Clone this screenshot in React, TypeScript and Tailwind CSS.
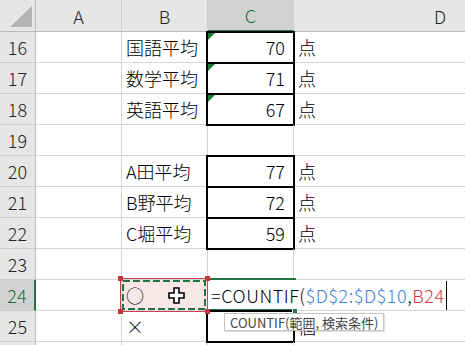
import React from 'react';

type RowData = {
  n: number | string;
  b?: string;
  c?: string;
  d?: string;
  box?: boolean;
  tri?: boolean;
};

const ROWS: RowData[] = [
  { n: 16, b: '国語平均', c: '70', d: '点', box: true, tri: true },
  { n: 17, b: '数学平均', c: '71', d: '点', box: true, tri: true },
  { n: 18, b: '英語平均', c: '67', d: '点', box: true, tri: true },
  { n: 19 },
  { n: 20, b: 'A田平均', c: '77', d: '点', box: true },
  { n: 21, b: 'B野平均', c: '72', d: '点', box: true },
  { n: 22, b: 'C堀平均', c: '59', d: '点', box: true },
  { n: 23 },
];

// thick black outline drawn over the cell's gridlines
function Box({ tri }: { tri?: boolean }) {
  return (
    <>
      <div className="pointer-events-none absolute -left-[2px] -right-[2px] -top-px -bottom-[2px] border-2 border-black" />
      {tri && (
        <div className="absolute left-0 top-px h-0 w-0 border-t-[7px] border-r-[7px] border-t-[#1e7a34] border-r-transparent" />
      )}
    </>
  );
}

function RowHead({ n, active }: { n: number | string; active?: boolean }) {
  return (
    <div
      className={
        active
          ? 'flex w-[36px] shrink-0 items-center justify-center border-b border-r-2 border-b-[#cfcfcf] border-r-[#217346] bg-[#d2d2d2] text-[#1e6b41]'
          : 'flex w-[36px] shrink-0 items-center justify-center border-b border-r border-b-[#cfcfcf] border-r-[#bcbcbc] bg-[#e6e6e6] text-[#222]'
      }
    >
      {n}
    </div>
  );
}

function Row({ n, b, c, d, box, tri }: RowData) {
  return (
    <div className="flex h-[31px]">
      <RowHead n={n} />
      <div className="w-[86px] shrink-0 border-b border-r border-[#d4d4d4]" />
      <div className="flex w-[86px] shrink-0 items-center whitespace-nowrap border-b border-r border-[#d4d4d4] pl-[4px]">
        {b}
      </div>
      <div className="relative flex w-[86px] shrink-0 items-center justify-end border-b border-r border-[#d4d4d4] pr-[8px]">
        {c}
        {box && <Box tri={tri} />}
      </div>
      <div className="flex w-[292px] shrink-0 items-center border-b border-[#d4d4d4] pl-[4px]">{d}</div>
    </div>
  );
}

function Marquee() {
  return (
    <svg
      className="pointer-events-none absolute -left-[4px] -top-[4px] z-10"
      width="92"
      height="38"
      viewBox="0 0 92 38"
    >
      <rect x="2.5" y="2.5" width="87" height="33" fill="none" stroke="#c8434a" strokeWidth="1" />
      <rect
        x="5"
        y="5"
        width="82"
        height="28"
        fill="none"
        stroke="#217346"
        strokeWidth="2"
        strokeDasharray="7 3"
      />
      <rect x="0" y="0" width="5" height="5" fill="#c0393e" />
      <rect x="87" y="0" width="5" height="5" fill="#c0393e" />
      <rect x="0" y="33" width="5" height="5" fill="#c0393e" />
      <rect x="87" y="33" width="5" height="5" fill="#c0393e" />
    </svg>
  );
}

function PointerCross() {
  return (
    <svg className="absolute left-[46px] top-[7px] z-10" width="18" height="18" viewBox="0 0 18 18">
      <path
        d="M6 1h5v5h5v5h-5v5H6v-5H1V6h5z"
        fill="#fff"
        stroke="#000"
        strokeWidth="1.6"
        strokeLinejoin="miter"
      />
    </svg>
  );
}

export default function App() {
  return (
    <div className="h-[345px] w-[465px] overflow-hidden bg-white font-['Noto_Sans_CJK_JP',sans-serif] text-[18px] font-light leading-none text-black">
      {/* column headers */}
      <div className="flex h-[32px]">
        <div className="relative w-[36px] shrink-0 border-b border-r border-b-[#bcbcbc] border-r-[#bcbcbc] bg-[#e6e6e6]">
          <div className="absolute left-[10px] top-[6px] h-0 w-0 border-b-[21px] border-l-[22px] border-b-[#b4b4b4] border-l-transparent" />
        </div>
        <div className="flex w-[86px] shrink-0 items-center justify-center border-b border-r border-b-[#bcbcbc] border-r-[#cdcdcd] bg-[#e6e6e6] text-[#222]">
          A
        </div>
        <div className="flex w-[86px] shrink-0 items-center justify-center border-b border-r border-b-[#bcbcbc] border-r-[#cdcdcd] bg-[#e6e6e6] text-[#222]">
          B
        </div>
        <div className="flex w-[86px] shrink-0 items-center justify-center border-b-2 border-r border-b-[#217346] border-r-[#cdcdcd] bg-[#d2d2d2] text-[#1e6b41]">
          C
        </div>
        <div className="flex w-[292px] shrink-0 items-center justify-center border-b border-b-[#bcbcbc] bg-[#e6e6e6] text-[#222]">
          D
        </div>
      </div>

      {ROWS.map((r) => (
        <Row key={r.n} {...r} />
      ))}

      {/* row 24: editing C24, B24 referenced */}
      <div className="flex h-[31px]">
        <RowHead n={24} active />
        <div className="w-[86px] shrink-0 border-b border-r border-[#d4d4d4]" />
        <div className="relative flex w-[86px] shrink-0 items-center border-b border-r border-[#d4d4d4] bg-[#f9e7e7] pl-[4px]">
          ○
          <Marquee />
          <PointerCross />
        </div>
        <div className="relative flex w-[86px] shrink-0 items-center border-b border-[#d4d4d4] pl-[3px]">
          <div className="absolute -left-[2px] -right-[2px] -top-[2px] h-[2px] bg-[#217346]" />
          <div className="absolute -bottom-[1px] -left-[2px] -right-[2px] h-[2px] bg-[#217346]" />
          <div className="absolute -bottom-[4px] -right-[4px] z-10 h-[6px] w-[6px] border border-white bg-[#217346]" />
          <div className="relative z-10 flex items-center whitespace-nowrap tracking-[0.55px]">
            <span>=COUNTIF(</span>
            <span className="text-[#3c7fd8]">$D$2:$D$10</span>
            <span>,</span>
            <span className="text-[#d23a3c]">B24</span>
            <span className="ml-px inline-block h-[29px] w-px bg-black" />
          </div>
          <div className="absolute left-[16px] top-[33px] z-20 flex h-[18px] items-center whitespace-nowrap border border-[#c4c4c4] bg-white px-[5px] text-[13px] font-normal text-[#444] shadow-[1px_1px_1px_rgba(0,0,0,0.12)]">
            COUNTIF(範囲, 検索条件)
          </div>
        </div>
        <div className="w-[292px] shrink-0 border-b border-[#d4d4d4]" />
      </div>

      <Row n={25} b="×" d="個" box />
      <Row n="" />
    </div>
  );
}
